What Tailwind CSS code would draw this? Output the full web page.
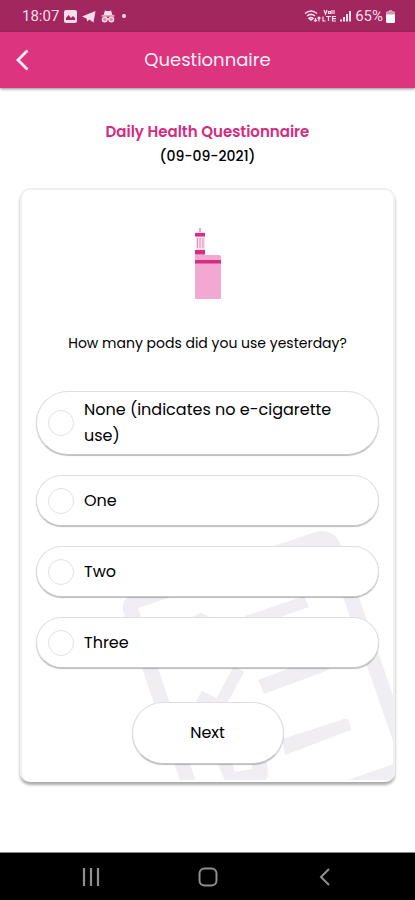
<!DOCTYPE html>
<html lang="en">
<head>
<meta charset="utf-8">
<meta name="viewport" content="width=device-width, initial-scale=1">
<title>Questionnaire</title>
<script src="https://cdn.jsdelivr.net/npm/@tailwindcss/browser@4"></script>
</head>
<body class="min-h-screen flex flex-col bg-white text-black font-['Poppins',Inter,sans-serif]">
  <div class="h-8 shrink-0 bg-[#a3275f] text-[#fbdcea] flex items-center justify-between pl-[22px] pr-[20px] font-[Roboto,sans-serif] text-[15px]">
    <div class="flex items-center gap-[5px]">
      <span>18:07</span>
      <svg class="w-[13px] h-[13px]" viewBox="0 0 13 13" aria-hidden="true"><rect width="13" height="13" rx="2" fill="currentColor"/><path d="M2 10V8l2.500-3L7 8l2-2 2 2v2z" fill="#a3275f"/></svg>
      <svg class="w-[14px] h-[13px]" viewBox="0 0 14 13" aria-hidden="true"><path d="M0 6.500 13.500 1 11.500 12.500 7.300 9.500 5.300 11.500 4.500 8.500z" fill="currentColor"/></svg>
      <svg class="w-[14px] h-[14px]" viewBox="0 0 14 14" aria-hidden="true" fill="currentColor"><path d="M2.500 6 4 1.500Q7 2.500 10 1.500L11.500 6z"/><path d="M.5 6.300h13v1.200H.5z"/><g fill="#d993b6" stroke="currentColor" stroke-width="1.200"><circle cx="3.700" cy="10.500" r="2.400"/><circle cx="10.300" cy="10.500" r="2.400"/><path d="M5.800 10q1.200-.8 2.400 0"/></g></svg>
      <span class="w-1 h-1 ml-0.5 rounded-full bg-[#fbdcea]"></span>
    </div>
    <div class="flex items-center gap-[3px]">
      <svg class="w-12 h-[14px]" viewBox="0 0 48 14" aria-hidden="true" fill="none" stroke="currentColor" stroke-width="1.600"><path d="M1 4.500q6-5 12 0M3 7q4-3.300 8 0M5 9.300q2-1.600 4 0L7 11z"/><path d="M11.500 9v3.500M10 11l1.500 1.500L13 11M15 12.500V8m-1.500 1.500L15 8l1.500 1.500" stroke-width="1.200"/><path d="m20 1 1.500 4L23 1m1.500 1.500h2v2h-2zM28 1v4m2-4v4M19 7.500v4.500h2.500M22 7.500h5M24.500 7.500V12M32 7.500h-3.500V12H32M28.500 9.700H32" stroke-width="1.200"/><g stroke-width="2"><path d="M37 12.500v-2M40 12.500V8M43 12.500V5M46 12.500V2"/></g></svg>
      <span>65%</span>
      <svg class="w-[9px] h-[13px]" viewBox="0 0 9 13" aria-hidden="true"><path d="M3 0h3v1.500H3z" fill="#d893b5"/><rect y="1.500" width="9" height="11.500" rx="1.500" fill="#fff"/><path d="M0 3q0-1.500 1.500-1.500h6Q9 1.500 9 3v1.500H0z" fill="#d893b5"/></svg>
    </div>
  </div>
  <header class="h-14 shrink-0 bg-[#dd347f] text-[#fff0f7] grid grid-cols-[56px_1fr_56px] items-center shadow-[0_1px_3px_#0007]">
    <button type="button" aria-label="Back" class="h-14 pl-4">
      <svg class="w-[13px] h-[22px]" viewBox="0 0 13 22" fill="none" stroke="currentColor" stroke-width="2.800"><path d="M11.500 1.500 2 11l9.500 9.500"/></svg>
    </button>
    <h1 class="text-center text-lg">Questionnaire</h1>
  </header>
  <main class="grow px-5 pt-8">
    <div class="text-center leading-6">
      <h2 class="text-[15px] leading-6 font-semibold text-[#d42c80]">Daily Health Questionnaire</h2>
      <p class="text-sm leading-6 font-medium">(09-09-2021)</p>
    </div>
    <form class="relative isolate overflow-hidden mt-5 px-[14px] pt-[38px] pb-[18px] rounded-[10px] border-2 border-[#f0f0f1] border-b-0 shadow-[0_3px_3px_#0005]">
      <svg class="absolute -z-10 right-0 bottom-[2px] w-[271px] h-[255px]" viewBox="122 527 271 255" fill="none" stroke="#f0eef3" aria-hidden="true">
        <g stroke-width="15" stroke-linejoin="round">
          <path d="M190 789 131 613q-3-7 5-10L315 542q14-5 19 8l70 202"/>
        </g>
        <g fill="#f0eef3" stroke="none">
          <path d="m245 618 59-20 5 11-59 21zM258 682l67-25 4 15-65 24zM282 741l62-20q4-1 5 2l2 9-66 25zM345 783l49-17v17zM217 764l8 19h38q5-1 5-7l-1-12h-15v7l-17 3-3-10z"/>
        </g>
        <path d="m199 698 20 10 20-37" stroke-width="12"/>
        <path d="m193 622 8-4 8 4" stroke-width="6"/>
      </svg>
      <svg class="block mx-auto w-[26px] h-[71px]" viewBox="0 0 26 71" aria-hidden="true"><path d="M4 0h2v4H4z" fill="#f0a6c9"/><path d="M1 4h9v28H1z" fill="#fbdceb"/><path d="M0 5h10v3.500H0zM0 22h10v4.500H0z" fill="#d62f80"/><path d="M2.500 10v10M5 10v10M8 10v10" stroke="#e990ba" stroke-width="1"/><path d="M0 27h24q2 0 2 2v41q0 1-1 1H1q-1 0-1-1z" fill="#f2a8d0"/><path d="M0 32h26v3.500H0z" fill="#d62f80"/></svg>
      <fieldset class="pt-8">
        <legend class="float-left w-full mb-9 text-center text-sm leading-6">How many pods did you use yesterday?</legend>
        <div class="clear-both flex flex-col gap-5 text-base leading-[26px]">
          <label class="min-h-[51px] flex items-center gap-[10px] py-[5px] pl-[11px] pr-8 rounded-[33px] bg-white border border-[#dfdfe1] border-b-[#c8c8ca] shadow-[0_1px_1px_#0004]">
            <input type="radio" name="pods" value="none" class="appearance-none shrink-0 w-[26px] h-[26px] rounded-full border border-[#e3e3e6] checked:border-8 checked:border-[#dd347f]">
            <span>None (indicates no e-cigarette use)</span>
          </label>
          <label class="min-h-[51px] flex items-center gap-[10px] py-[5px] pl-[11px] pr-8 rounded-[33px] bg-white border border-[#dfdfe1] border-b-[#c8c8ca] shadow-[0_1px_1px_#0004]">
            <input type="radio" name="pods" value="1" class="appearance-none shrink-0 w-[26px] h-[26px] rounded-full border border-[#e3e3e6] checked:border-8 checked:border-[#dd347f]">
            <span>One</span>
          </label>
          <label class="min-h-[51px] flex items-center gap-[10px] py-[5px] pl-[11px] pr-8 rounded-[33px] bg-white border border-[#dfdfe1] border-b-[#c8c8ca] shadow-[0_1px_1px_#0004]">
            <input type="radio" name="pods" value="2" class="appearance-none shrink-0 w-[26px] h-[26px] rounded-full border border-[#e3e3e6] checked:border-8 checked:border-[#dd347f]">
            <span>Two</span>
          </label>
          <label class="min-h-[51px] flex items-center gap-[10px] py-[5px] pl-[11px] pr-8 rounded-[33px] bg-white border border-[#dfdfe1] border-b-[#c8c8ca] shadow-[0_1px_1px_#0004]">
            <input type="radio" name="pods" value="3" class="appearance-none shrink-0 w-[26px] h-[26px] rounded-full border border-[#e3e3e6] checked:border-8 checked:border-[#dd347f]">
            <span>Three</span>
          </label>
        </div>
      </fieldset>
      <button type="button" class="block mx-auto mt-[34px] w-[152px] h-[62px] rounded-full bg-white border border-[#dfdfe1] border-b-[#c3c8cc] text-base shadow-[0_1px_1px_#0004]">Next</button>
    </form>
  </main>
  <nav aria-label="System navigation" class="h-12 shrink-0 bg-black border-t border-[#8a8a8a] text-[#8f8f8f] grid grid-cols-3 items-center px-8">
    <button type="button" aria-label="Recent apps"><svg class="mx-auto w-[18px] h-[18px]" viewBox="0 0 18 18" stroke="currentColor" stroke-width="2.200"><path d="M2 0v18M9 0v18M16 0v18"/></svg></button>
    <button type="button" aria-label="Home"><svg class="mx-auto w-5 h-5" viewBox="0 0 20 20" fill="none" stroke="currentColor" stroke-width="2"><rect x="1.500" y="1.500" width="17" height="17" rx="5"/></svg></button>
    <button type="button" aria-label="Back"><svg class="mx-auto w-[11px] h-[18px]" viewBox="0 0 11 18" fill="none" stroke="currentColor" stroke-width="2"><path d="M10 1 2 9l8 8"/></svg></button>
  </nav>
</body>
</html>
